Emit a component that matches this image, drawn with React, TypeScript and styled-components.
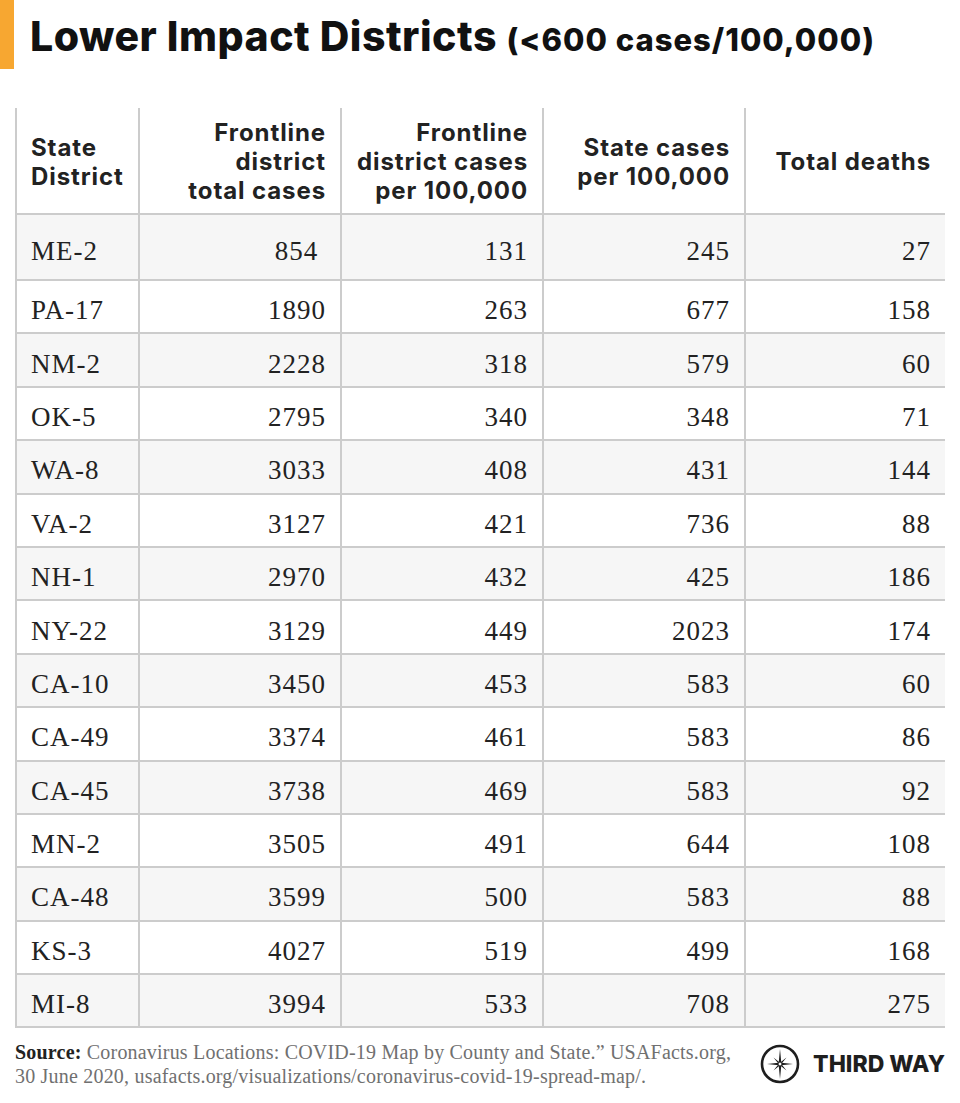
import styled, { createGlobalStyle } from "styled-components";

const GlobalStyle = createGlobalStyle`
  html, body {
    margin: 0;
    padding: 0;
    background: #ffffff;
  }
`;

type Row = {
  district: string;
  total: string;
  districtRate: string;
  stateRate: string;
  deaths: string;
};

const rows: Row[] = [
  { district: "ME-2", total: "854\u00a0", districtRate: "131", stateRate: "245", deaths: "27" },
  { district: "PA-17", total: "1890", districtRate: "263", stateRate: "677", deaths: "158" },
  { district: "NM-2", total: "2228", districtRate: "318", stateRate: "579", deaths: "60" },
  { district: "OK-5", total: "2795", districtRate: "340", stateRate: "348", deaths: "71" },
  { district: "WA-8", total: "3033", districtRate: "408", stateRate: "431", deaths: "144" },
  { district: "VA-2", total: "3127", districtRate: "421", stateRate: "736", deaths: "88" },
  { district: "NH-1", total: "2970", districtRate: "432", stateRate: "425", deaths: "186" },
  { district: "NY-22", total: "3129", districtRate: "449", stateRate: "2023", deaths: "174" },
  { district: "CA-10", total: "3450", districtRate: "453", stateRate: "583", deaths: "60" },
  { district: "CA-49", total: "3374", districtRate: "461", stateRate: "583", deaths: "86" },
  { district: "CA-45", total: "3738", districtRate: "469", stateRate: "583", deaths: "92" },
  { district: "MN-2", total: "3505", districtRate: "491", stateRate: "644", deaths: "108" },
  { district: "CA-48", total: "3599", districtRate: "500", stateRate: "583", deaths: "88" },
  { district: "KS-3", total: "4027", districtRate: "519", stateRate: "499", deaths: "168" },
  { district: "MI-8", total: "3994", districtRate: "533", stateRate: "708", deaths: "275" },
];

export default function App() {
  return (
    <Page>
      <GlobalStyle />
      <TitleBar>
        <Accent />
        <Title>
          Lower Impact Districts <small>(&lt;600 cases/100,000)</small>
        </Title>
      </TitleBar>

      <DataTable>
        <colgroup>
          <col style={{ width: 123 }} />
          <col style={{ width: 202 }} />
          <col style={{ width: 202 }} />
          <col style={{ width: 202 }} />
          <col />
        </colgroup>
        <thead>
          <tr>
            <HeadCell $align="left">
              State
              <br />
              District
            </HeadCell>
            <HeadCell>
              Frontline
              <br />
              district
              <br />
              total cases
            </HeadCell>
            <HeadCell>
              Frontline
              <br />
              district cases
              <br />
              per 100,000
            </HeadCell>
            <HeadCell>
              State cases
              <br />
              per 100,000
            </HeadCell>
            <HeadCell>Total deaths</HeadCell>
          </tr>
        </thead>
        <tbody>
          {rows.map((r, i) => (
            <BodyRow key={r.district} $shaded={i % 2 === 0} $first={i === 0}>
              <Cell $align="left">{r.district}</Cell>
              <Cell>{r.total}</Cell>
              <Cell>{r.districtRate}</Cell>
              <Cell>{r.stateRate}</Cell>
              <Cell>{r.deaths}</Cell>
            </BodyRow>
          ))}
        </tbody>
      </DataTable>

      <Footer>
        <Source>
          <strong>Source:</strong> Coronavirus Locations: COVID-19 Map by County
          and State.” USAFacts.org,
          <br />
          30 June 2020, usafacts.org/visualizations/coronavirus-covid-19-spread-map/.
        </Source>
        <Brand>
          <svg width="40" height="40" viewBox="0 0 40 40" aria-hidden="true">
            <circle cx="20" cy="20" r="18" fill="none" stroke="#1e1e1e" strokeWidth="2.6" />
            <path
              d="M20 5 L21.3 18.7 L33 20 L21.3 21.3 L20 35 L18.7 21.3 L7 20 L18.7 18.7 Z"
              fill="#1e1e1e"
            />
            <path
              d="M13.5 13.5 L20.7 19.3 L26.5 26.5 L19.3 20.7 Z M26.5 13.5 L20.7 20.7 L13.5 26.5 L19.3 19.3 Z"
              fill="#1e1e1e"
            />
            <circle cx="20" cy="20" r="2" fill="#ffffff" stroke="#1e1e1e" strokeWidth="1" />
          </svg>
          <BrandName>THIRD WAY</BrandName>
        </Brand>
      </Footer>
    </Page>
  );
}

const Page = styled.div`
  width: 960px;
  height: 1103px;
  background: #ffffff;
  overflow: hidden;
`;

const TitleBar = styled.header`
  display: flex;
  align-items: center;
  height: 69px;
`;

const Accent = styled.div`
  width: 14px;
  align-self: stretch;
  background: #f7a731;
`;

const Title = styled.h1`
  margin: 2px 0 0 16px;
  font-family: Inter, "Noto Sans", sans-serif;
  font-weight: 800;
  font-size: 41px;
  letter-spacing: 0.5px;
  color: #111111;

  small {
    font-size: 31px;
    font-weight: 800;
    letter-spacing: 1px;
  }
`;

const DataTable = styled.table`
  margin: 39px 0 0 15px;
  width: 930px;
  border-collapse: collapse;
  table-layout: fixed;
  border-left: 2px solid #cccccc;
  border-bottom: 2px solid #cccccc;
`;

const HeadCell = styled.th<{ $align?: "left" | "right" }>`
  height: 106px;
  padding: 2px 14px 0 14px;
  box-sizing: border-box;
  text-align: ${(p) => p.$align ?? "right"};
  vertical-align: middle;
  font-family: Inter, "Noto Sans", sans-serif;
  font-weight: 700;
  font-size: 24px;
  line-height: 29px;
  letter-spacing: 0.9px;
  color: #222222;
  border-left: 2px solid #cccccc;
  border-bottom: 2px solid #cccccc;

  &:first-child {
    border-left: none;
  }
`;

const BodyRow = styled.tr<{ $shaded: boolean; $first: boolean }>`
  height: ${(p) => (p.$first ? "66px" : "53.4px")};
  background: ${(p) => (p.$shaded ? "#f6f6f6" : "#ffffff")};
`;

const Cell = styled.td<{ $align?: "left" | "right" }>`
  padding: 8px 14px 0 14px;
  text-align: ${(p) => p.$align ?? "right"};
  vertical-align: middle;
  font-family: "Liberation Serif", serif;
  font-size: 27px;
  letter-spacing: 1px;
  color: #222222;
  border-left: 2px solid #cccccc;
  border-bottom: 2px solid #cccccc;

  &:first-child {
    border-left: none;
  }
`;

const Footer = styled.footer`
  display: flex;
  justify-content: space-between;
  align-items: center;
  padding: 12px 15px 0 15px;
`;

const Source = styled.p`
  margin: 0;
  font-family: "Liberation Serif", serif;
  font-size: 20px;
  line-height: 24px;
  letter-spacing: 0.2px;
  color: #707070;

  strong {
    color: #222222;
    font-weight: 700;
  }
`;

const Brand = styled.div`
  display: flex;
  align-items: center;
  gap: 13px;
`;

const BrandName = styled.span`
  font-family: Inter, "Noto Sans", sans-serif;
  font-weight: 800;
  font-size: 23px;
  color: #1e1e1e;
`;
